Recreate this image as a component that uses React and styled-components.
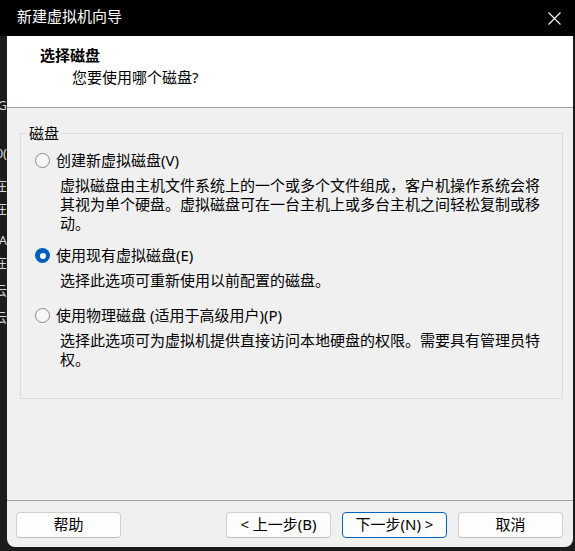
import React from 'react';
import styled, { createGlobalStyle } from 'styled-components';

const GlobalStyle = createGlobalStyle`
  *, *::before, *::after {
    box-sizing: border-box;
  }
  html, body {
    margin: 0;
    padding: 0;
    background: #1c1c1c;
  }
  body {
    font-family: "Noto Sans", "Noto Sans CJK SC", sans-serif;
    font-size: 15px;
    color: #000;
  }
`;

const Page = styled.div`
  width: 575px;
  height: 551px;
  background: #1c1c1c;
  overflow: hidden;
  display: flex;
  flex-direction: column;
`;

const TitleBar = styled.div`
  height: 36px;
  flex: none;
  background: #000;
  color: #fff;
  display: flex;
  align-items: center;
  padding: 0 14px 4px 17px;
  line-height: 20px;
`;

const Title = styled.div`
  flex: 1;
`;

const CloseButton = styled.div`
  width: 13px;
  height: 13px;
  display: flex;
  margin-top: 4px;
`;

const MainRow = styled.div`
  display: flex;
`;

const Strip = styled.div`
  width: 7px;
  flex: none;
  overflow: hidden;
  padding-top: 62px;
  display: flex;
  flex-direction: column;
  color: #d8d8d8;
  font-size: 13px;
  line-height: 14px;
`;

const Fragment = styled.div`
  display: flex;
  justify-content: flex-end;
  white-space: nowrap;
  margin-top: ${p => p.gap}px;
`;

const Dialog = styled.div`
  width: 566px;
  height: 511px;
  background: #f0f0f0;
  border-radius: 0 0 8px 8px;
  overflow: hidden;
  display: flex;
  flex-direction: column;
`;

const Header = styled.div`
  height: 72px;
  flex: none;
  background: #fff;
  border-bottom: 1px solid #a0a0a0;
  padding: 9px 0 0 33px;
  line-height: 20px;
`;

const HeaderTitle = styled.div`
  font-weight: 700;
`;

const HeaderSub = styled.div`
  margin-top: 2px;
  padding-left: 32px;
`;

const Body = styled.div`
  flex: 1;
  padding: 16px 10px 0 13px;
`;

const Group = styled.fieldset`
  margin: 0;
  border: 1px solid #dcdcdc;
  padding: 9px 10px 29px 14px;
  line-height: 19px;
`;

const Legend = styled.legend`
  padding: 0 2px;
  margin-left: -8px;
  line-height: 18px;
`;

const Option = styled.div`
  margin-top: ${p => p.gap}px;
`;

const OptionRow = styled.div`
  display: flex;
  align-items: center;
  gap: 6px;
  white-space: nowrap;
`;

const Radio = styled.span`
  width: 15px;
  height: 15px;
  border-radius: 50%;
  flex: none;
  display: flex;
  align-items: center;
  justify-content: center;
  border: ${p => (p.checked ? 'none' : '1px solid #8a8a8a')};
  background: ${p => (p.checked ? '#005fb8' : '#f6f6f6')};

  &::after {
    content: '';
    display: ${p => (p.checked ? 'block' : 'none')};
    width: 6px;
    height: 6px;
    border-radius: 50%;
    background: #fff;
  }
`;

const Desc = styled.div`
  margin-top: 6px;
  padding-left: 25px;
  white-space: nowrap;
`;

const Footer = styled.div`
  flex: none;
  border-top: 1px solid #a0a0a0;
  padding: 11px 10px 9px 9px;
  display: flex;
  gap: 11px;
`;

const Spacer = styled.div`
  flex: 1;
`;

const Button = styled.button`
  width: 105px;
  height: 26px;
  font: inherit;
  font-size: 15px;
  line-height: 18px;
  color: #000;
  background: #fdfdfd;
  border: 1px solid ${p => (p.primary ? '#0067c0' : '#d0d0d0')};
  border-bottom-color: ${p => (p.primary ? '#0067c0' : '#bdbdbd')};
  border-radius: 4px;
  padding: 0 0 2px;
  white-space: nowrap;
`;

const options = [
  {
    label: '创建新虚拟磁盘(V)',
    lines: [
      '虚拟磁盘由主机文件系统上的一个或多个文件组成，客户机操作系统会将',
      '其视为单个硬盘。虚拟磁盘可在一台主机上或多台主机之间轻松复制或移',
      '动。',
    ],
    gap: 0,
  },
  {
    label: '使用现有虚拟磁盘(E)',
    lines: ['选择此选项可重新使用以前配置的磁盘。'],
    checked: true,
    gap: 13,
  },
  {
    label: '使用物理磁盘 (适用于高级用户)(P)',
    lines: [
      '选择此选项可为虚拟机提供直接访问本地硬盘的权限。需要具有管理员特',
      '权。',
    ],
    gap: 16,
  },
];

// bits of the window behind the dialog, cut off at the left edge
const fragments = [
  { text: 'G', gap: 0 },
  { text: '0(', gap: 34 },
  { text: '在', gap: 18 },
  { text: '在', gap: 9 },
  { text: 'A', gap: 18 },
  { text: '在', gap: 8 },
  { text: '云', gap: 14 },
  { text: '云', gap: 13 },
];

export default function App() {
  return (
    <Page>
      <GlobalStyle />
      <TitleBar>
        <Title>新建虚拟机向导</Title>
        <CloseButton>
          <svg width="13" height="13" viewBox="0 0 13 13">
            <path d="M0.5 0.5 L12.5 12.5 M12.5 0.5 L0.5 12.5" stroke="#fff" strokeWidth="1.1" />
          </svg>
        </CloseButton>
      </TitleBar>
      <MainRow>
        <Strip>
          {fragments.map((f, i) => (
            <Fragment key={i} gap={f.gap}>{f.text}</Fragment>
          ))}
        </Strip>
        <Dialog>
          <Header>
            <HeaderTitle>选择磁盘</HeaderTitle>
            <HeaderSub>您要使用哪个磁盘?</HeaderSub>
          </Header>
          <Body>
            <Group>
              <Legend>磁盘</Legend>
              {options.map(opt => (
                <Option key={opt.label} gap={opt.gap}>
                  <OptionRow>
                    <Radio checked={opt.checked} />
                    {opt.label}
                  </OptionRow>
                  <Desc>
                    {opt.lines.map(line => (
                      <div key={line}>{line}</div>
                    ))}
                  </Desc>
                </Option>
              ))}
            </Group>
          </Body>
          <Footer>
            <Button>帮助</Button>
            <Spacer />
            <Button>&lt; 上一步(B)</Button>
            <Button primary>下一步(N) &gt;</Button>
            <Button>取消</Button>
          </Footer>
        </Dialog>
      </MainRow>
    </Page>
  );
}
